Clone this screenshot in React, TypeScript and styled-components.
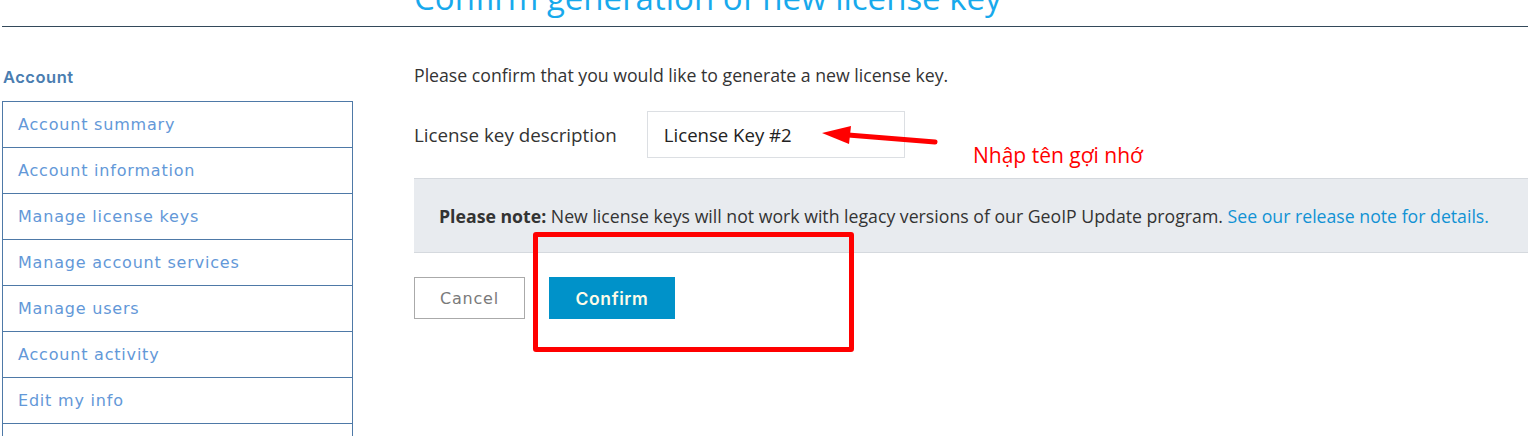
import React from "react";
import styled, { createGlobalStyle } from "styled-components";

const Global = createGlobalStyle`
  html, body { margin: 0; padding: 0; background: #fff; }
  body { font-family: "Open Sans", "Noto Sans", sans-serif; color: #333; overflow: hidden; }
  * { box-sizing: border-box; }
`;

const Page = styled.div`
  position: relative;
  width: 1528px;
  height: 436px;
  overflow: hidden;
`;

const Header = styled.header`
  height: 27px;
  margin-left: 2px;
  padding-left: 412px;
  border-bottom: 1px solid #33495a;
  display: flex;
  align-items: flex-end;
`;

const Title = styled.h1`
  margin: 0 0 12px;
  font-family: "Open Sans", sans-serif;
  font-weight: 400;
  font-size: 33px;
  line-height: 33px;
  color: #18a9ec;
  white-space: nowrap;
`;

const Layout = styled.div`
  display: grid;
  grid-template-columns: 351px 1fr;
  column-gap: 61px;
  padding-left: 2px;
`;

const Sidebar = styled.nav`
  padding-top: 38px;
`;

const SideHeading = styled.div`
  font-family: "Inter", "DejaVu Sans", sans-serif;
  font-weight: 600;
  font-size: 16.5px;
  letter-spacing: 0.5px;
  line-height: 24px;
  color: #4a7db0;
  padding-left: 1px;
  margin-bottom: 12px;
`;

const SideList = styled.ul`
  list-style: none;
  margin: 0;
  padding: 0;
  border: 1px solid #4e79a7;
  border-bottom: none;
`;

const SideItem = styled.li`
  height: 46px;
  display: flex;
  align-items: center;
  padding-left: 15px;
  border-bottom: 1px solid #4e79a7;
  font-family: "DejaVu Sans", sans-serif;
  font-size: 16px;
  letter-spacing: 0.8px;
  color: #6398d8;
  white-space: nowrap;
`;

const Main = styled.main`
  padding-top: 36px;
`;

const Lead = styled.p`
  margin: 0 0 24px;
  font-size: 17.7px;
  line-height: 24px;
  color: #333;
  white-space: nowrap;
`;

const FieldRow = styled.div`
  display: flex;
  align-items: center;
  gap: 30px;
`;

const FieldLabel = styled.label`
  font-size: 18.8px;
  color: #333;
  white-space: nowrap;
`;

const TextBox = styled.div`
  width: 258px;
  height: 47px;
  border: 1px solid #dcdfe3;
  display: flex;
  align-items: center;
  padding-left: 16px;
  font-size: 18.6px;
  color: #222;
`;

const Note = styled.div`
  margin-top: 20px;
  height: 75px;
  background: #e8ebef;
  border-top: 1px solid #d5d9de;
  border-bottom: 1px solid #d5d9de;
  display: flex;
  align-items: center;
  padding-left: 25px;
  font-size: 17.7px;
  color: #333;
  white-space: nowrap;
`;

const Strong = styled.strong`
  font-weight: 700;
`;

const Link = styled.a`
  color: #1192d4;
  text-decoration: none;
`;

const Actions = styled.div`
  margin-top: 24px;
  display: flex;
  gap: 24px;
`;

const Button = styled.button<{ $primary?: boolean }>`
  height: 42px;
  padding: 0;
  font-family: "DejaVu Sans", sans-serif;
  font-size: 16px;
  letter-spacing: 0.8px;
  cursor: pointer;
  ${(p) =>
    p.$primary
      ? `
    width: 126px;
    background: #0092c9;
    border: none;
    color: #fdfbe8;
    font-family: "Inter", "DejaVu Sans", sans-serif;
    font-weight: 600;
    font-size: 17.5px;
    letter-spacing: 0.6px;
  `
      : `
    width: 111px;
    background: #fff;
    border: 1px solid #aaaaaa;
    color: #7a7a7a;
  `}
`;

const Annotation = styled.div`
  position: absolute;
  left: 973px;
  top: 141px;
  font-size: 21px;
  line-height: 28px;
  color: #ff0000;
  white-space: nowrap;
`;

const ArrowSvg = styled.svg`
  position: absolute;
  left: 815px;
  top: 120px;
`;

const Highlight = styled.div`
  position: absolute;
  left: 533px;
  top: 232px;
  width: 321px;
  height: 120px;
  border: 5px solid #ff0000;
  border-radius: 3px;
`;

const items = [
  "Account summary",
  "Account information",
  "Manage license keys",
  "Manage account services",
  "Manage users",
  "Account activity",
  "Edit my info",
  "",
];

export default function App() {
  return (
    <Page>
      <Global />
      <Header>
        <Title>Confirm generation of new license key</Title>
      </Header>
      <Layout>
        <Sidebar>
          <SideHeading>Account</SideHeading>
          <SideList>
            {items.map((t, i) => (
              <SideItem key={i}>{t}</SideItem>
            ))}
          </SideList>
        </Sidebar>
        <Main>
          <Lead>Please confirm that you would like to generate a new license key.</Lead>
          <FieldRow>
            <FieldLabel>License key description</FieldLabel>
            <TextBox>License Key #2</TextBox>
          </FieldRow>
          <Note>
            <Strong>Please note:</Strong>&nbsp;New license keys will not work with legacy versions of our GeoIP Update program.&nbsp;
            <Link href="#">See our release note for details.</Link>
          </Note>
          <Actions>
            <Button>Cancel</Button>
            <Button $primary>Confirm</Button>
          </Actions>
        </Main>
      </Layout>
      <ArrowSvg width="130" height="30" viewBox="0 0 130 30">
        <line x1="33" y1="15" x2="120" y2="22" stroke="#ff0000" strokeWidth="5" strokeLinecap="round" />
        <polygon points="7,13 36,6 34,24" fill="#ff0000" />
      </ArrowSvg>
      <Annotation>Nhập tên gợi nhớ</Annotation>
      <Highlight />
    </Page>
  );
}
